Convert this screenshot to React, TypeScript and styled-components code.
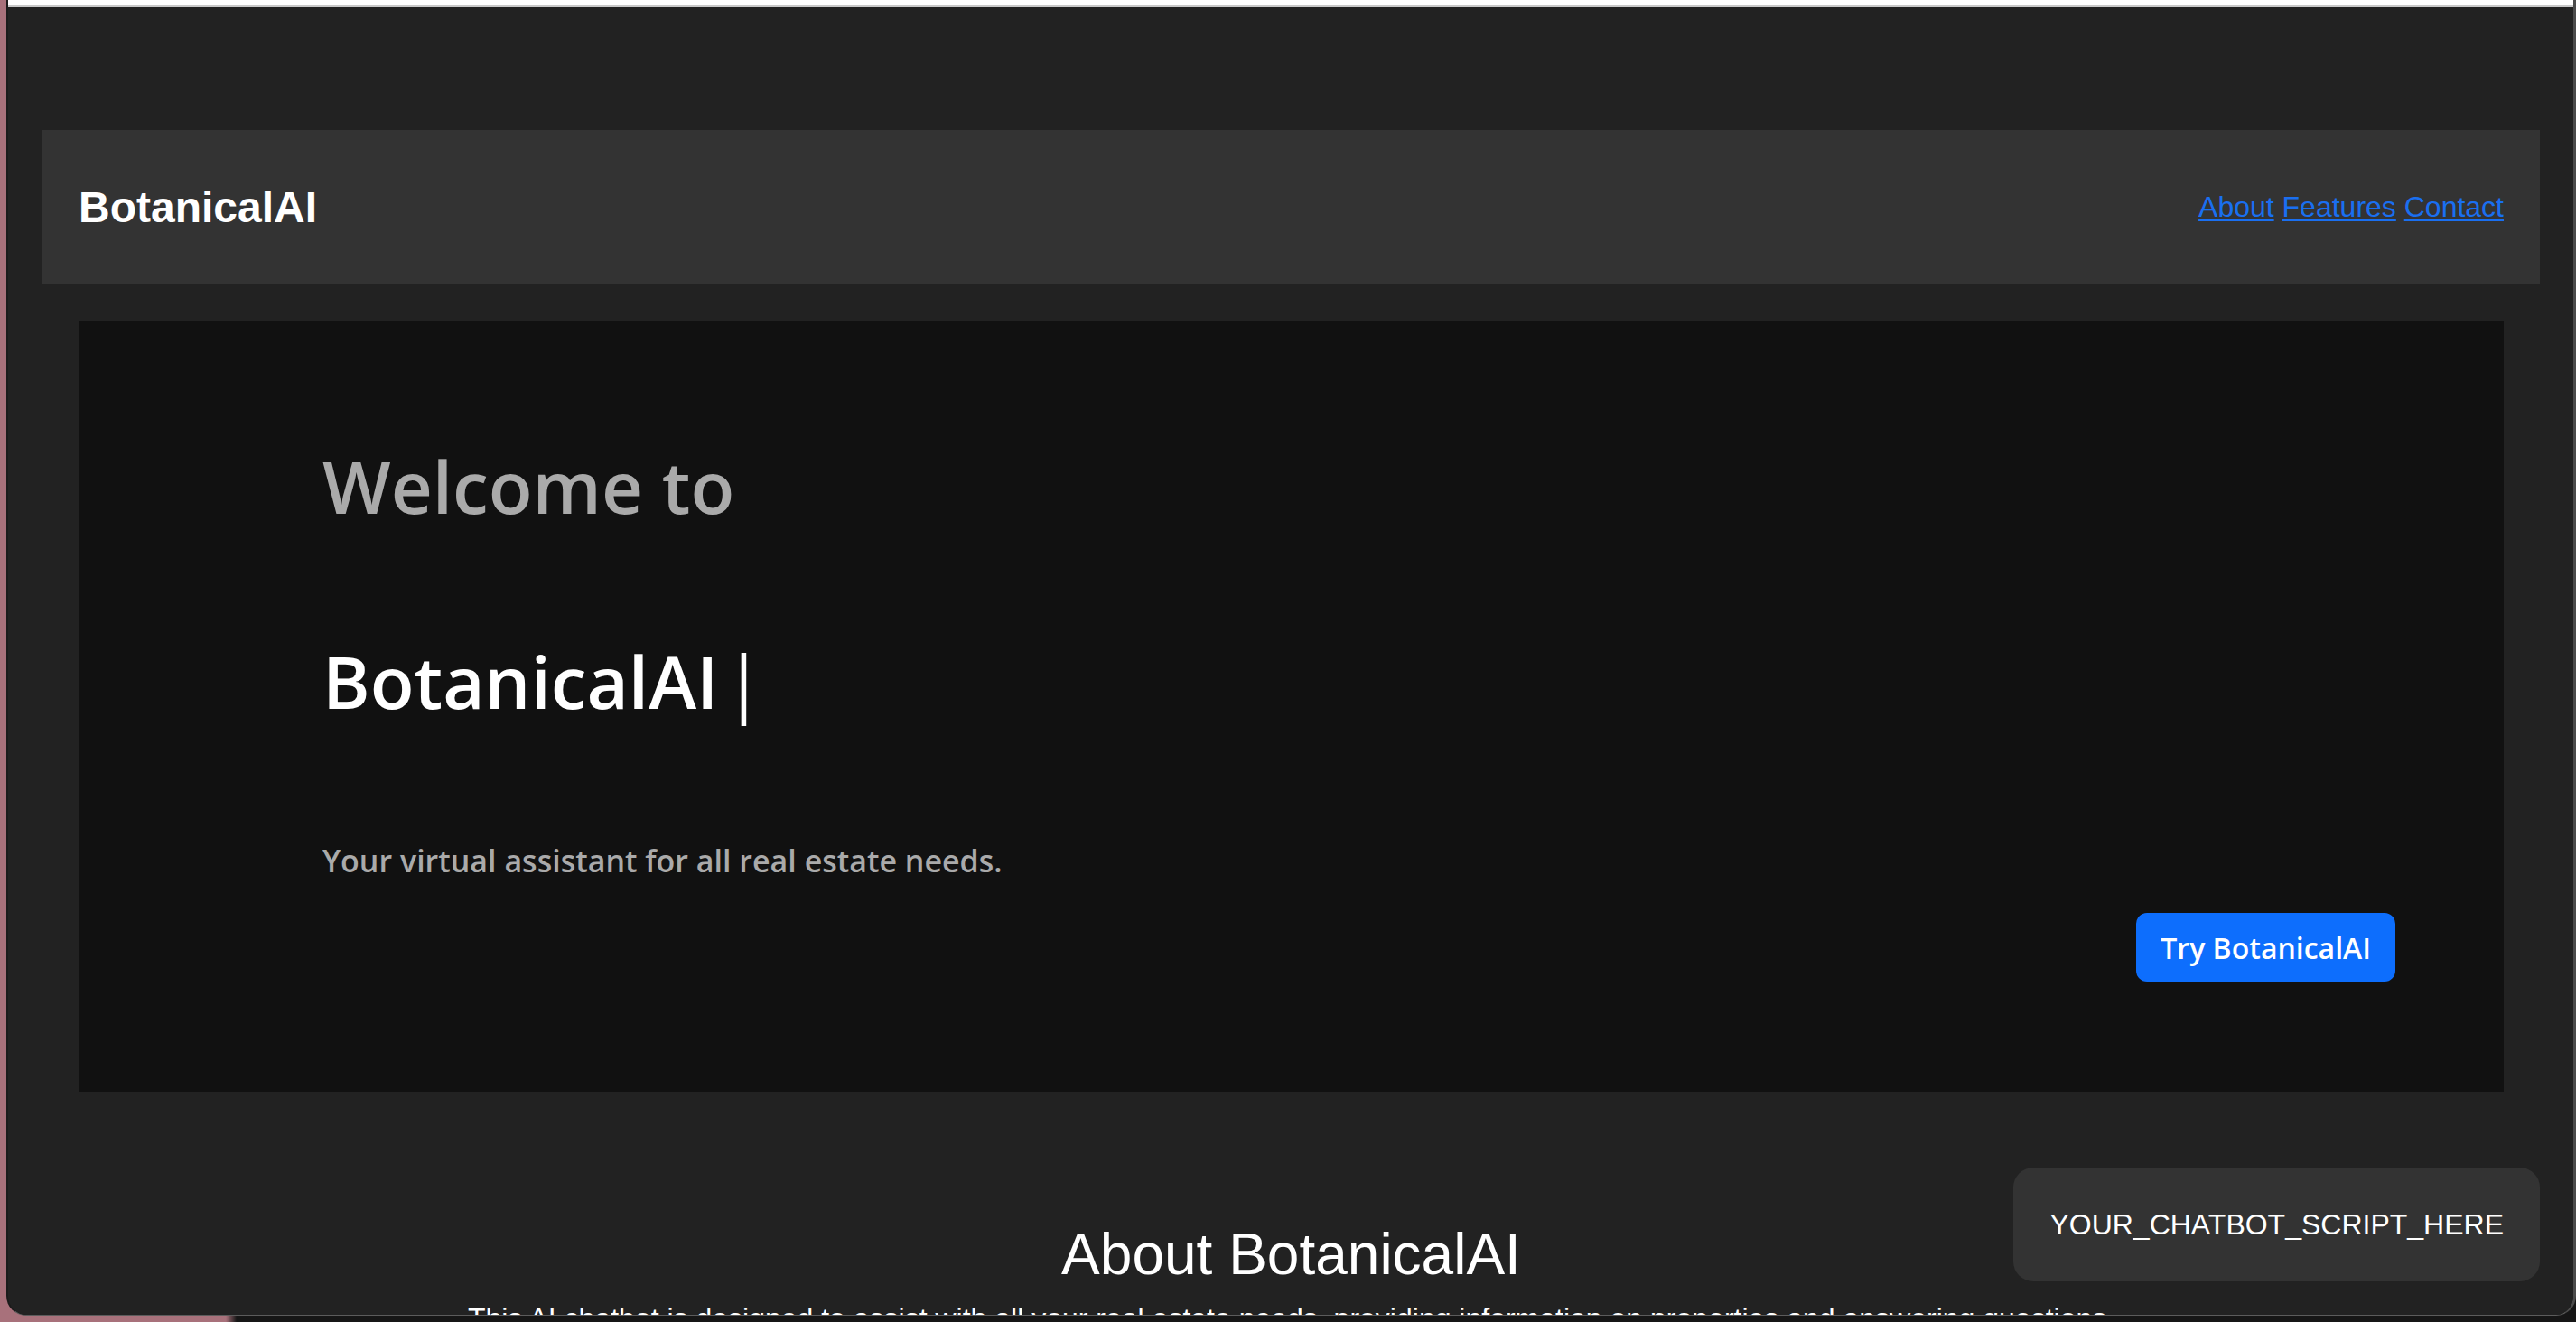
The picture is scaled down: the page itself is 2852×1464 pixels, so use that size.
import React from 'react';
import styled, { createGlobalStyle } from 'styled-components';

const GlobalStyle = createGlobalStyle`
  html,
  body {
    margin: 0;
    padding: 0;
    overflow: hidden;
  }
  body {
    font-family: 'Liberation Sans', Arial, sans-serif;
    background: #a8717b;
  }
`;

const Desktop = styled.div`
  width: 2852px;
  height: 1464px;
  background: linear-gradient(90deg, #a8717b 0, #a8717b 250px, #161616 262px);
  overflow: hidden;
`;

const Window = styled.div`
  position: relative;
  box-sizing: border-box;
  margin-left: 7px;
  width: 2845px;
  height: 1457px;
  display: flex;
  flex-direction: column;
  background: #222;
  border-left: 2px solid #1b1b1b;
  border-right: 3px solid #4b4b4b;
  border-bottom: 1px solid #5c5c5c;
  border-radius: 0 0 22px 22px;
  overflow: hidden;
`;

const TitleStrip = styled.div`
  height: 6px;
  flex-shrink: 0;
  background: #fff;
  border-bottom: 2px solid #c9c9c9;
`;

const Page = styled.main`
  flex: 1;
  padding: 136px 37px 0 38px;
  background: #222;
  color: #fff;
`;

const Header = styled.header`
  height: 171px;
  padding: 0 40px;
  display: flex;
  align-items: center;
  justify-content: space-between;
  background: #333;
`;

const Logo = styled.div`
  font-size: 48px;
  font-weight: 700;
  color: #fff;
`;

const Nav = styled.nav`
  font-size: 32px;
`;

const NavLink = styled.a`
  color: #1a6ff0;
  text-decoration: underline;
`;

const Hero = styled.section`
  margin: 41px 40px 0;
  padding: 134px 120px 122px 270px;
  background: #111;
  display: flex;
  flex-direction: column;
  font-family: 'Open Sans', 'Noto Sans', sans-serif;
`;

const HeroTitle = styled.h1<{ $muted?: boolean; $gap?: number }>`
  margin: ${(p) => p.$gap ?? 0}px 0 0;
  font-size: 80px;
  line-height: 96px;
  font-weight: 600;
  color: ${(p) => (p.$muted ? '#aaa' : '#fff')};
`;

const Cursor = styled.span`
  font-weight: 400;
  margin-left: 6px;
`;

const Subtitle = styled.p`
  margin: 127px 0 0;
  font-size: 34px;
  line-height: 48px;
  font-weight: 600;
  color: #aaa;
`;

const ButtonRow = styled.div`
  margin-top: 34px;
  display: flex;
  justify-content: flex-end;
`;

const PrimaryButton = styled.button`
  height: 76px;
  padding: 0 25px;
  border: 2px solid #0d6efd;
  border-radius: 12px;
  background: #0d6efd;
  color: #fff;
  font-family: 'Open Sans', 'Noto Sans', sans-serif;
  font-size: 32px;
  font-weight: 600;
  cursor: pointer;
`;

const About = styled.section`
  margin-top: 143px;
  text-align: center;
`;

const SectionTitle = styled.h2`
  margin: 0;
  font-size: 64px;
  font-weight: 400;
  line-height: 74px;
`;

const SectionText = styled.p`
  margin: 14px 0 0;
  font-size: 32px;
  line-height: 40px;
`;

const ChatWidget = styled.div`
  position: absolute;
  right: 37px;
  bottom: 37px;
  padding: 40px;
  border-radius: 22px;
  background: #333;
  color: #fff;
  font-size: 32px;
  line-height: 46px;
`;

export default function App() {
  return (
    <Desktop>
      <GlobalStyle />
      <Window>
        <TitleStrip />
        <Page>
          <Header>
            <Logo>BotanicalAI</Logo>
            <Nav>
              <NavLink href="#about">About</NavLink> <NavLink href="#features">Features</NavLink>{' '}
              <NavLink href="#contact">Contact</NavLink>
            </Nav>
          </Header>
          <Hero>
            <HeroTitle $muted>Welcome to</HeroTitle>
            <HeroTitle $gap={120}>
              BotanicalAI<Cursor>|</Cursor>
            </HeroTitle>
            <Subtitle>Your virtual assistant for all real estate needs.</Subtitle>
            <ButtonRow>
              <PrimaryButton>Try BotanicalAI</PrimaryButton>
            </ButtonRow>
          </Hero>
          <About id="about">
            <SectionTitle>About BotanicalAI</SectionTitle>
            <SectionText>
              This AI chatbot is designed to assist with all your real estate needs, providing information on
              properties and answering questions.
            </SectionText>
          </About>
        </Page>
        <ChatWidget>YOUR_CHATBOT_SCRIPT_HERE</ChatWidget>
      </Window>
    </Desktop>
  );
}
